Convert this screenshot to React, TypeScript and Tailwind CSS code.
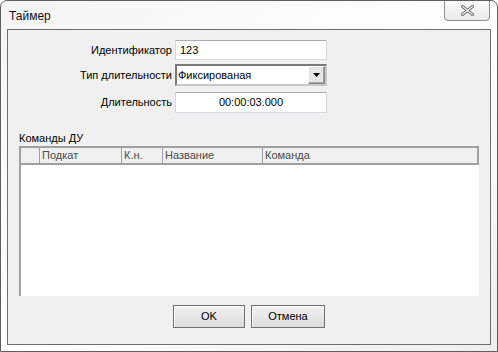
import React from "react";

export default function App() {
  const font = { fontFamily: '"Liberation Sans", Arial, sans-serif' };
  return (
    <div
      className="w-[498px] h-[352px] relative flex flex-col overflow-hidden rounded-t-[7px] border border-[#5f5f5f] bg-gradient-to-br from-[#f4f4f4] via-[#ffffff] to-[#eeeeee] text-[11px] text-black"
      style={font}
    >
      {/* title bar */}
      <div className="h-[28px] flex items-center pl-[8px] pt-[2px] text-[12px] text-[#111]">Таймер</div>
      <div className="absolute top-[-1px] right-[7px] w-[46px] h-[21px] rounded-b-[4px] border border-[#8e8e8e] bg-gradient-to-b from-[#fbfbfb] to-[#eaeaea] flex items-center justify-center">
        <svg width="13" height="11" viewBox="0 0 13 11">
          <path d="M1.5 1.5 L11.5 9.5 M11.5 1.5 L1.5 9.5" stroke="#6b6b6b" strokeWidth="3" strokeLinecap="round" />
          <path d="M1.5 1.5 L11.5 9.5 M11.5 1.5 L1.5 9.5" stroke="#f4f4f4" strokeWidth="1.2" strokeLinecap="round" />
        </svg>
      </div>

      {/* client area */}
      <div className="mx-[6px] mb-[6px] flex-1 flex flex-col border border-[#6e6e6e] bg-[#f0f0f0]">
        <div className="mt-[10px] flex flex-col gap-[4px]">
          <div className="flex items-center h-[20px]">
            <div className="w-[167px] pr-[3px] text-right">Идентификатор</div>
            <div className="w-[152px] h-[20px] border border-[#d5d8dd] border-t-[#abadb3] bg-white pl-[4px] flex items-center">123</div>
          </div>
          <div className="flex items-center h-[22px]">
            <div className="w-[167px] pr-[3px] text-right">Тип длительности</div>
            <div className="w-[152px] h-[22px] border-2 border-[#7a7a7a] border-b-[#c8c8c8] border-r-[#c8c8c8] bg-white flex items-center justify-between">
              <span className="pl-[1px]">Фиксированая</span>
              <div className="w-[17px] h-[18px] bg-[#e6e6e6] border border-[#8a8a8a] border-t-white border-l-white shadow-[inset_-1px_-1px_0_#a0a0a0] flex items-center justify-center">
                <svg width="7" height="4" viewBox="0 0 7 4"><path d="M0 0 H7 L3.5 4 Z" fill="#000" /></svg>
              </div>
            </div>
          </div>
          <div className="flex items-center h-[21px] mt-[2px]">
            <div className="w-[167px] pr-[3px] text-right">Длительность</div>
            <div className="w-[152px] h-[21px] border border-[#d5d8dd] border-t-[#abadb3] bg-white flex items-center justify-center">00:00:03.000</div>
          </div>
        </div>

        <div className="ml-[11px] mt-[18px] h-[14px] leading-[14px]">Команды ДУ</div>

        <div className="ml-[11px] mt-[1px] w-[460px] h-[150px] flex flex-col border-2 border-[#a0a0a0] border-b-0 border-r-0 bg-white">
          <div className="flex h-[17px] bg-[#f0f0f0] border-b-2 border-r-2 border-[#a0a0a0] text-[#4a4a4a]">
            <div className="w-[19px] border-r border-[#a0a0a0]" />
            <div className="w-[82px] border-r border-[#a0a0a0] pl-[2px] leading-[15px]">Подкат</div>
            <div className="w-[41px] border-r border-[#a0a0a0] pl-[2px] leading-[15px]">К.н.</div>
            <div className="w-[100px] border-r border-[#a0a0a0] pl-[2px] leading-[15px]">Название</div>
            <div className="flex-1 pl-[2px] leading-[15px]">Команда</div>
          </div>
          <div className="flex-1 bg-white" />
        </div>

        <div className="mt-[9px] flex pl-[165px] gap-[6px]">
          <button className="w-[72px] h-[23px] border border-[#707070] bg-gradient-to-b from-[#f2f2f2] to-[#dcdcdc] shadow-[inset_1px_1px_0_#fff] flex items-center justify-center text-[11px]">OK</button>
          <button className="w-[74px] h-[23px] border border-[#707070] bg-gradient-to-b from-[#f2f2f2] to-[#dcdcdc] shadow-[inset_1px_1px_0_#fff] flex items-center justify-center text-[11px]">Отмена</button>
        </div>
      </div>
    </div>
  );
}
